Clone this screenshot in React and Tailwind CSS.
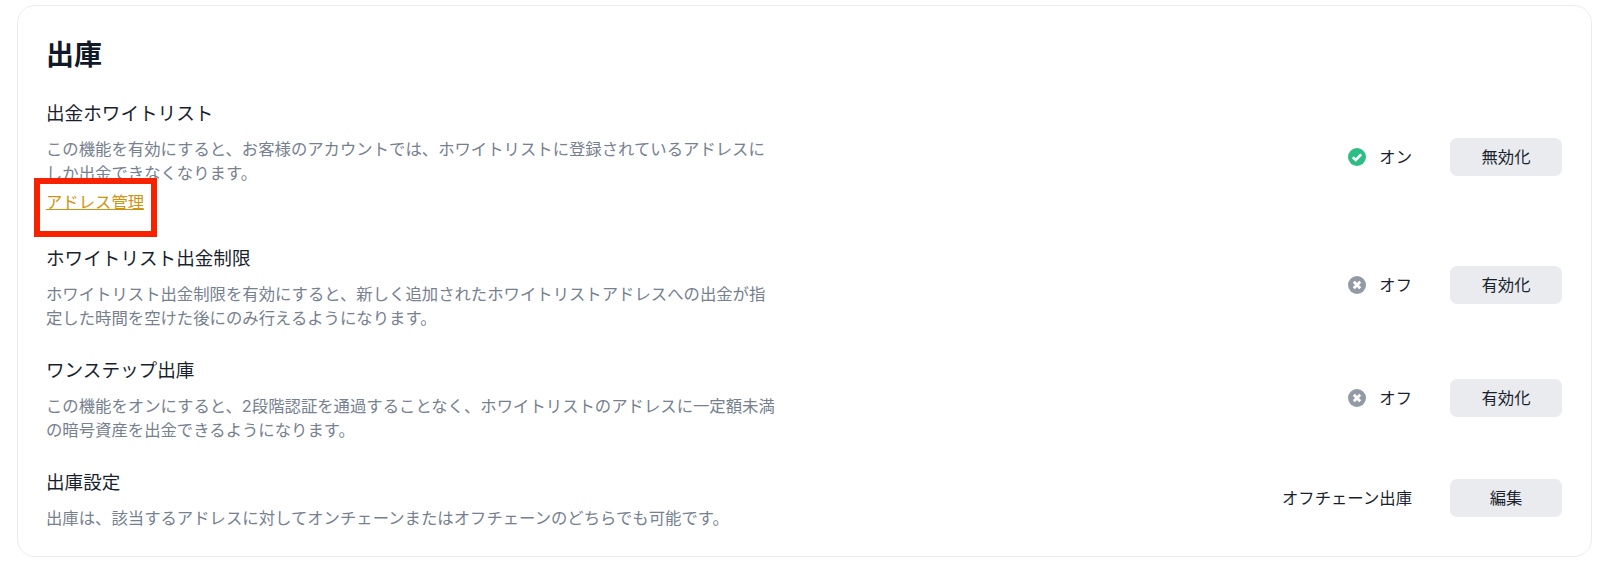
const rows = [
  {
    title: '出金ホワイトリスト',
    desc: 'この機能を有効にすると、お客様のアカウントでは、ホワイトリストに登録されているアドレスにしか出金できなくなります。',
    status: 'on',
    label: 'オン',
    action: '無効化',
    link: 'アドレス管理',
    cls: 'mb-[32px]',
    side: 'mb-[1px]',
    descW: 'w-[725px]',
  },
  {
    title: 'ホワイトリスト出金制限',
    desc: 'ホワイトリスト出金制限を有効にすると、新しく追加されたホワイトリストアドレスへの出金が指定した時間を空けた後にのみ行えるようになります。',
    status: 'off',
    label: 'オフ',
    action: '有効化',
    cls: 'mb-[28px]',
    side: 'mb-[6px]',
    descW: 'w-[725px]',
  },
  {
    title: 'ワンステップ出庫',
    desc: 'この機能をオンにすると、2段階認証を通過することなく、ホワイトリストのアドレスに一定額未満の暗号資産を出金できるようになります。',
    status: 'off',
    label: 'オフ',
    action: '有効化',
    cls: 'mb-[28px]',
    side: 'mb-[4px]',
    descW: 'w-[735px]',
  },
  {
    title: '出庫設定',
    desc: '出庫は、該当するアドレスに対してオンチェーンまたはオフチェーンのどちらでも可能です。',
    label: 'オフチェーン出庫',
    action: '編集',
    cls: '',
    side: 'mb-[4px]',
    descW: 'w-[735px]',
  },
]

function StatusIcon({ status }) {
  if (status === 'on') {
    return (
      <svg width="18" height="18" viewBox="0 0 18 18" className="mr-[13px]">
        <circle cx="9" cy="9" r="9" fill="#2ebd85" />
        <path d="M4.8 9.2l3 2.8 5.4-5.6" fill="none" stroke="#fff" strokeWidth="2.6" />
      </svg>
    )
  }
  return (
    <svg width="18" height="18" viewBox="0 0 18 18" className="mr-[13px]">
      <circle cx="9" cy="9" r="9" fill="#929aa5" />
      <path d="M5.8 5.8l6.4 6.4M12.2 5.8l-6.4 6.4" fill="none" stroke="#fff" strokeWidth="2.8" />
    </svg>
  )
}

function Row({ row }) {
  return (
    <div className={`flex items-center ${row.cls}`}>
      <div className={row.descW}>
        <div className="text-[18.6px] leading-[24px] text-[#1a1f2e]">{row.title}</div>
        <p className="mt-[12px] text-[16.36px] leading-[24px] text-[#76808f]">{row.desc}</p>
        {row.link && (
          <div className="relative mt-[4.5px] h-[24.5px]">
            <a className="text-[16.36px] leading-[24.5px] text-[#d1920f] underline">{row.link}</a>
            {/* annotation drawn over the screenshot */}
            <div className="absolute left-[-12px] top-[-11.5px] w-[123px] h-[59px] border-[6px] border-[#f82200]" />
          </div>
        )}
      </div>
      <div className={`ml-auto flex items-center ${row.side}`}>
        {row.status && <StatusIcon status={row.status} />}
        <span className="text-[16.36px] text-[#1a1f2e]">{row.label}</span>
        <button className="ml-[38px] w-[112px] h-[37.5px] rounded-[7px] bg-[#e9ebef] text-[16.36px] text-[#1a1f2e]">
          {row.action}
        </button>
      </div>
    </div>
  )
}

export default function App() {
  return (
    <div className="h-[570px] bg-white pt-[5px] pl-[17px] pr-[8px] font-['Inter','Noto_Sans_CJK_JP',sans-serif]">
      <div className="h-[552px] rounded-[18px] border border-[#eaecef] pl-[28px] pr-[29px] pt-[31px]">
        <h1 className="text-[28px] leading-[36px] font-semibold text-[#111827] mb-[28px]">出庫</h1>
        {rows.map((row) => (
          <Row key={row.title} row={row} />
        ))}
      </div>
    </div>
  )
}
